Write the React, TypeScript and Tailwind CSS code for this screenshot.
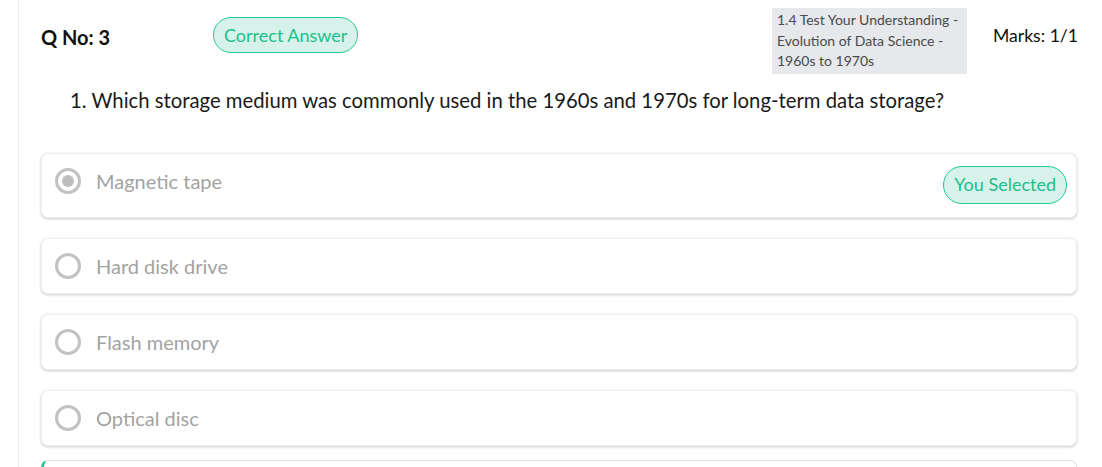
import React from "react";

function Radio({ checked }: { checked?: boolean }) {
  return (
    <span className="w-[26px] h-[26px] rounded-full border-[3px] border-[#c2c2c2] flex items-center justify-center shrink-0">
      {checked && <span className="w-[12px] h-[12px] rounded-full bg-[#bdbdbd]" />}
    </span>
  );
}

function Option({ label, selected }: { label: string; selected?: boolean }) {
  return (
    <div className="rounded-[7px] border border-[#efefef] bg-white shadow-[0_1px_3px_rgba(0,0,0,0.22)] pl-[13px] pr-[9px] flex items-start justify-between">
      <div className="flex items-center gap-[15px] py-[15px] h-[54px]">
        <Radio checked={selected} />
        <span className="text-[20px] text-[#a3a3a3] leading-[24px]">{label}</span>
      </div>
      {selected && (
        <span className="mt-[12px] mb-[13px] h-[38px] px-[10px] rounded-full border border-[#1fc995] bg-[#d6f2ea] text-[#1dbf8c] text-[18px] flex items-center">
          You Selected
        </span>
      )}
    </div>
  );
}

export default function App() {
  return (
    <div className="w-[1102px] h-[467px] overflow-hidden bg-white" style={{ fontFamily: "Lato, 'Noto Sans', sans-serif" }}>
      <div className="ml-[18px] border-l border-[#ececec] pl-[22px] pr-[25px] min-h-[520px]">
        <div className="flex items-start pt-[8px] mr-[-1px]">
          <div className="w-[172px] pt-[17px] text-[20px] font-bold text-[#111] leading-[24px]">Q No: 3</div>
          <div className="mt-[9px] h-[36px] px-[10px] rounded-full border border-[#1fc995] bg-[#d6f2ea] text-[#1dbf8c] text-[18px] flex items-center">
            Correct Answer
          </div>
          <div className="flex-1" />
          <div className="w-[195px] bg-[#e6e8eb] px-[5px] py-[2px] text-[14px] leading-[20.5px] text-[#4a4a4a]">
            1.4 Test Your Understanding - Evolution of Data Science - 1960s to 1970s
          </div>
          <div className="ml-[26px] pt-[17px] text-[17.6px] text-[#111] leading-[22px]">Marks: 1/1</div>
        </div>
        <div className="pl-[29px] mt-[14px] text-[20.3px] text-[#1a1a1a] leading-[24px]">
          1. Which storage medium was commonly used in the 1960s and 1970s for long-term data storage?
        </div>
        <div className="mt-[41px] flex flex-col gap-[20px]">
          <Option label="Magnetic tape" selected />
          <Option label="Hard disk drive" />
          <Option label="Flash memory" />
          <Option label="Optical disc" />
        </div>
        <div className="mt-[14px] h-[60px] rounded-[7px] border border-[#e2e2e2] border-l-[3px] border-l-[#1fc995] bg-white" />
      </div>
    </div>
  );
}
